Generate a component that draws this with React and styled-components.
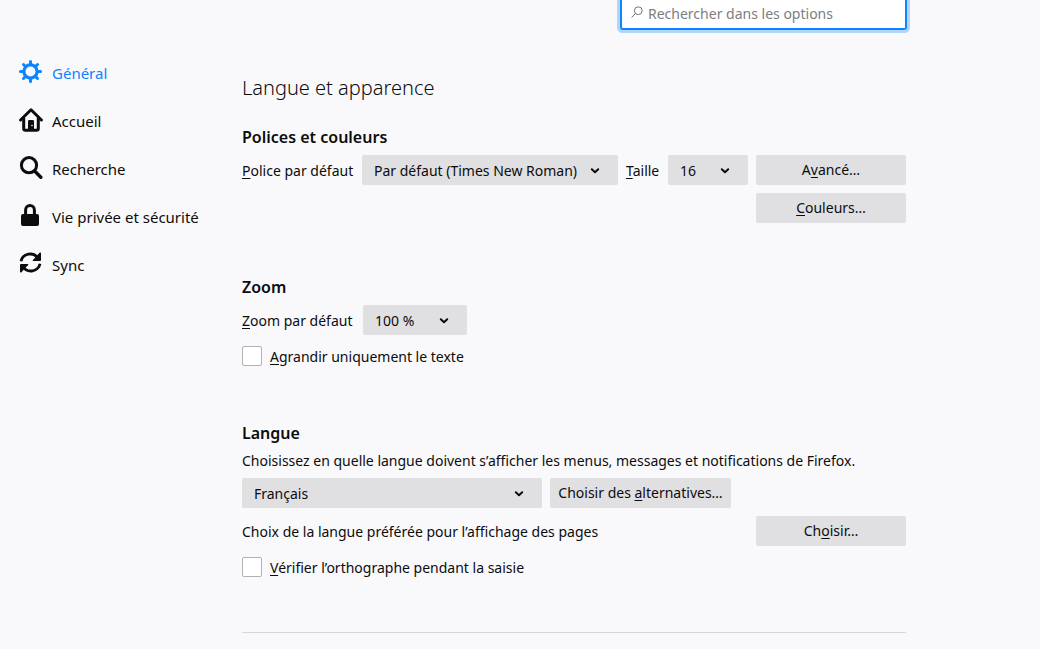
import React from 'react';
import styled, { createGlobalStyle } from 'styled-components';

const GlobalStyle = createGlobalStyle`
  *, *::before, *::after { box-sizing: border-box; }
  body {
    margin: 0;
    background: #f9f9fb;
    color: #0c0c0d;
    font: 14px/20px "Segoe UI", "Noto Sans", sans-serif;
  }
  button, input, select { font: inherit; color: inherit; }
`;

const Page = styled.div`
  display: flex;
  align-items: flex-start;
  gap: 24px;
`;

const Sidebar = styled.nav`
  flex: 0 0 218px;
  padding-top: 48px;
`;

const Category = styled.a`
  display: flex;
  align-items: center;
  gap: 9px;
  height: 48px;
  padding-left: 19px;
  font-size: 15px;
  white-space: nowrap;
  text-decoration: none;
  color: ${(p) => (p.$active ? '#0a84ff' : '#0c0c0d')};

  svg { flex: none; }
  span { padding-top: 1px; }
`;

const Content = styled.main`
  flex: 1;
  max-width: 664px;
`;

const SearchField = styled.label`
  display: flex;
  align-items: center;
  gap: 5px;
  width: 285px;
  height: 29px;
  margin-left: auto;
  padding: 0 9px;
  background: #fff;
  border: 1px solid #0a84ff;
  border-top: 0;
  border-radius: 0 0 2px 2px;
  box-shadow: 0 0 0 1px #0a84ff, 0 0 0 4px rgba(10, 132, 255, 0.3);
  color: #737373;

  svg { flex: none; margin-bottom: 4px; }
`;

const SearchInput = styled.input`
  flex: 1;
  min-width: 0;
  padding: 0;
  border: 0;
  outline: 0;
  background: none;

  &::placeholder { color: #7d7d7f; opacity: 1; }
`;

const Title = styled.h1`
  margin: 44px 0 22px;
  font-size: 20px;
  font-weight: 300;
  line-height: 30px;
`;

const Section = styled.section`
  display: flex;
  flex-direction: column;
  gap: 8px;
  margin-bottom: 52px;
`;

const SectionTitle = styled.h2`
  margin: 0 0 -2px;
  font-size: 16px;
  font-weight: 600;
  line-height: 24px;
`;

const Description = styled.p`
  margin: 0;
  line-height: 19px;
`;

const SplitRow = styled.div`
  display: grid;
  grid-template-columns: 1fr 150px;
  gap: 8px;
`;

const Row = styled.div`
  display: flex;
  align-items: center;
  gap: 8px;
  height: 30px;
`;

const ButtonColumn = styled.div`
  display: flex;
  flex-direction: column;
  gap: 8px;
`;

const Caption = styled.span`
  padding-top: 2px;
`;

const Label = styled.label`
  flex: 0 0 ${(p) => p.$width}px;
  padding-top: 2px;
  white-space: nowrap;
`;

const SelectBox = styled.div`
  display: grid;
  align-items: center;
  flex: ${(p) => (p.$width ? `0 0 ${p.$width}px` : '1')};

  > * { grid-area: 1 / 1; }
  svg { justify-self: end; margin: 2px 18px 0 0; pointer-events: none; }
`;

const Select = styled.select`
  appearance: none;
  width: 100%;
  height: 30px;
  padding: 2px 36px 0 12px;
  border: 0;
  border-radius: 2px;
  background: #e0e0e2;
`;

const Button = styled.button`
  flex: none;
  height: 30px;
  padding: 0 8px 1px;
  border: 0;
  border-radius: 2px;
  background: #e0e0e2;
  white-space: nowrap;
`;

const WideButton = styled(Button)`
  width: 181px;
`;

const CheckLabel = styled.label`
  display: flex;
  align-items: center;
  gap: 8px;
  height: 26px;
`;

const Checkbox = styled.input`
  appearance: none;
  width: 20px;
  height: 20px;
  margin: 0;
  border: 1px solid #b1b1b3;
  border-radius: 2px;
  background: #fff;

  &:checked { background: #0a84ff; }
`;

const Key = styled.u`
  text-underline-offset: 2px;
  text-decoration-thickness: 1px;
  text-decoration-skip-ink: none;
`;

const Divider = styled.hr`
  margin: 0;
  border: 0;
  border-top: 1px solid #d7d7db;
`;

const Icon = ({ children }) => (
  <svg width="24" height="24" viewBox="0 0 24 24" fill="none" stroke="currentColor" strokeWidth="3" aria-hidden="true">
    {children}
  </svg>
);

const GearIcon = () => (
  <Icon>
    <circle cx="11.5" cy="11.5" r="6.6" strokeWidth="3.2" />
    <path
      strokeLinecap="round"
      d="M11.5 1.5v3M11.5 18.5v3M1.5 11.5h3M18.5 11.5h3M4.5 4.5l2 2M16.5 16.5l2 2M4.5 18.5l2-2M16.5 6.5l2-2"
    />
  </Icon>
);

const HomeIcon = () => (
  <Icon>
    <path strokeLinecap="round" strokeLinejoin="round" d="M1.6 12L12 1.8 22.4 12" />
    <path strokeLinejoin="round" d="M4.7 10v10.5q0 1.8 1.8 1.8h11q1.8 0 1.8-1.8V10" />
    <path fill="currentColor" stroke="none" d="M9 13.2q0-1.2 1.2-1.2h3.6q1.2 0 1.2 1.2V22H9z" />
    <circle cx="13" cy="17.5" r="0.8" fill="#f9f9fb" stroke="none" />
  </Icon>
);

const SearchIcon = () => (
  <Icon>
    <circle cx="10" cy="9.2" r="7.6" />
    <path strokeLinecap="round" strokeWidth="3.4" d="M15.6 15l6.2 6.2" />
  </Icon>
);

const LockIcon = () => (
  <Icon>
    <path d="M6.6 11V6.2a4.4 4.7 0 0 1 8.8 0V11" />
    <rect x="2" y="10" width="18" height="12" rx="2" fill="currentColor" stroke="none" />
  </Icon>
);

const SyncIcon = () => (
  <Icon>
    <path strokeWidth="2.8" d="M2 9.2A9.3 9 0 0 1 18.8 6M21 11.8A9.3 9 0 0 1 4.2 15" />
    <path
      fill="currentColor"
      stroke="none"
      d="M20.8.6q1.2-.6 1.2.8V8q0 1-1 1h-6.6q-1.4 0-.5-1.1zM2.2 20.4q-1.2.6-1.2-.8V13q0-1 1-1h6.6q1.4 0 .5 1.1z"
    />
  </Icon>
);

const Magnifier = () => (
  <svg width="12" height="12" viewBox="0 0 12 12" fill="none" stroke="currentColor" aria-hidden="true">
    <circle cx="7.3" cy="4.7" r="3.9" />
    <path strokeLinecap="round" d="M4.5 7.5L.9 11.2" />
  </svg>
);

const Chevron = () => (
  <svg width="10" height="8" viewBox="0 0 10 8" fill="none" stroke="currentColor" strokeWidth="2" strokeLinecap="round" strokeLinejoin="round" aria-hidden="true">
    <path d="M1.8 2.3L5 5.3l3.2-3" />
  </svg>
);

const Dropdown = ({ id, width, options, label }) => (
  <SelectBox $width={width}>
    <Select id={id} aria-label={label}>
      {options.map((o) => (
        <option key={o}>{o}</option>
      ))}
    </Select>
    <Chevron />
  </SelectBox>
);

const categories = [
  { id: 'general', name: 'Général', icon: GearIcon },
  { id: 'accueil', name: 'Accueil', icon: HomeIcon },
  { id: 'recherche', name: 'Recherche', icon: SearchIcon },
  { id: 'confidentialite', name: 'Vie privée et sécurité', icon: LockIcon },
  { id: 'sync', name: 'Sync', icon: SyncIcon },
];

export default function App() {
  return (
    <>
      <GlobalStyle />
      <Page>
        <Sidebar>
          {categories.map(({ id, name, icon: CategoryIcon }) => (
            <Category key={id} href={`#${id}`} $active={id === 'general'}>
              <CategoryIcon />
              <span>{name}</span>
            </Category>
          ))}
        </Sidebar>
        <Content>
          <SearchField>
            <Magnifier />
            <SearchInput type="search" placeholder="Rechercher dans les options" aria-label="Rechercher dans les options" />
          </SearchField>

          <Title>Langue et apparence</Title>

          <Section>
            <SectionTitle>Polices et couleurs</SectionTitle>
            <SplitRow>
              <Row>
                <Label htmlFor="font" $width={112}><Key>P</Key>olice par défaut</Label>
                <Dropdown id="font" options={['Par défaut (Times New Roman)']} />
                <Label htmlFor="size" $width={34}><Key>T</Key>aille</Label>
                <Dropdown id="size" width={80} options={['16']} />
              </Row>
              <ButtonColumn>
                <Button type="button">A<Key>v</Key>ancé…</Button>
                <Button type="button"><Key>C</Key>ouleurs…</Button>
              </ButtonColumn>
            </SplitRow>
          </Section>

          <Section>
            <SectionTitle>Zoom</SectionTitle>
            <Row>
              <Label htmlFor="zoom" $width={113}><Key>Z</Key>oom par défaut</Label>
              <Dropdown id="zoom" width={104} options={['100 %']} />
            </Row>
            <CheckLabel>
              <Checkbox type="checkbox" />
              <Caption><Key>A</Key>grandir uniquement le texte</Caption>
            </CheckLabel>
          </Section>

          <Section>
            <SectionTitle>Langue</SectionTitle>
            <Description>
              Choisissez en quelle langue doivent s’afficher les menus, messages et notifications de Firefox.
            </Description>
            <Row>
              <Dropdown width={300} options={['Français']} label="Langue" />
              <WideButton type="button">Choisir des <Key>a</Key>lternatives…</WideButton>
            </Row>
            <SplitRow>
              <Row>
                <Caption>Choix de la langue préférée pour l’affichage des pages</Caption>
              </Row>
              <Button type="button">Ch<Key>o</Key>isir…</Button>
            </SplitRow>
            <CheckLabel>
              <Checkbox type="checkbox" />
              <Caption><Key>V</Key>érifier l’orthographe pendant la saisie</Caption>
            </CheckLabel>
          </Section>

          <Divider />
        </Content>
      </Page>
    </>
  );
}
